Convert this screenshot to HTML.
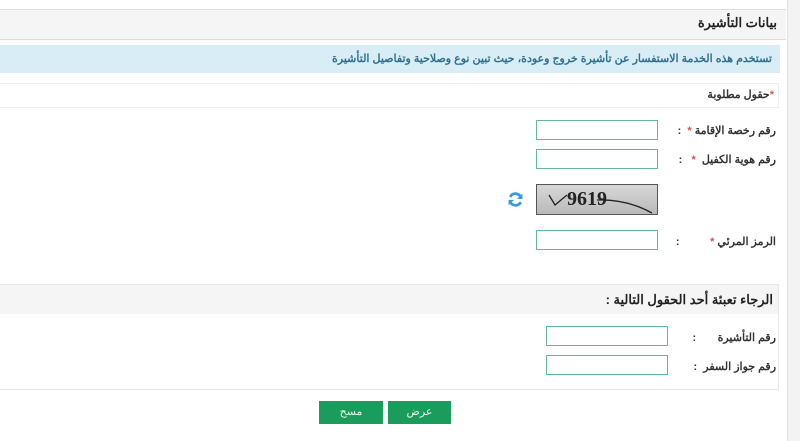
<!DOCTYPE html>
<html><head><meta charset="utf-8"><style>
body{margin:0;width:800px;height:441px;background:#fff;font-family:"Liberation Sans","Noto Sans CJK SC",sans-serif;position:relative;overflow:hidden;direction:rtl}
.a{position:absolute}
.inp{position:absolute;height:18px;border:1px solid #5fb99a;background:#fff}
.lbl{position:absolute;font-size:11px;font-weight:bold;color:#333;right:24px;white-space:nowrap}
.st{color:#d9534f}
.btn{position:absolute;top:401px;height:23px;width:63px;background:#1a9c5c;color:#e8f5ee;font-size:11px;text-align:center;line-height:23px}
</style></head><body>
<div class="a" style="left:787px;top:0;width:13px;height:441px;background:#f3f3f3;border-left:1px solid #e2e2e2"></div>
<div class="a" style="left:0;top:9px;width:786px;height:29px;background:#f5f5f5;border-top:1px solid #ddd;border-bottom:1px solid #ddd"></div>
<div class="a" style="right:23px;top:15px;font-size:13px;font-weight:bold;color:#222">بيانات التأشيرة</div>
<div class="a" style="left:0;top:45px;width:780px;height:28px;background:#d9edf7"></div>
<div class="a" style="right:28px;top:52px;font-size:11px;font-weight:bold;color:#31708f">تستخدم هذه الخدمة الاستفسار عن تأشيرة خروج وعودة، حيث تبين نوع وصلاحية وتفاصيل التأشيرة</div>
<div class="a" style="left:0;top:83px;width:778px;height:23px;background:#fff;border:1px solid #eee;border-left:none"></div>
<div class="a" style="right:26px;top:88px;font-size:11px;font-weight:bold;color:#333"><span class="st">*</span>حقول مطلوبة</div>
<div class="lbl" style="top:124px">رقم رخصة الإقامة <span class="st">*</span> &nbsp;:</div>
<div class="inp" style="left:536px;top:120px;width:120px"></div>
<div class="lbl" style="top:153px">رقم هوية الكفيل &nbsp;<span class="st">*</span> &nbsp;&nbsp;:</div>
<div class="inp" style="left:536px;top:149px;width:120px"></div>
<div class="a" style="left:536px;top:184px;width:120px;height:29px;border:1px solid #555;background:linear-gradient(#d8d8d8,#b9b9b9);direction:ltr"><span style="position:absolute;left:30px;top:3px;font-size:20px;font-weight:bold;font-family:'Liberation Serif',serif;color:#222">9619</span><svg class="a" style="left:0;top:0" width="120" height="29"><path d="M12 10 L18 20 L30 10 M60 15 Q90 14 115 28" stroke="#222" fill="none" stroke-width="1.3"/></svg></div>
<svg class="a" style="left:507px;top:191px" width="17" height="17" viewBox="0 0 16 16"><path d="M13 6 A5.5 5.5 0 0 0 3 5.5 M3 10 A5.5 5.5 0 0 0 13 10.5" stroke="#3a9bd5" stroke-width="2.6" fill="none"/><path d="M14.5 2.5 L14.5 7.5 L9.5 7.5Z M1.5 13.5 L1.5 8.5 L6.5 8.5Z" fill="#3a9bd5"/></svg>
<div class="lbl" style="top:235px">الرمز المرئي <span class="st">*</span> &nbsp;&nbsp;&nbsp;&nbsp;&nbsp;&nbsp;&nbsp;&nbsp;&nbsp;:</div>
<div class="inp" style="left:536px;top:230px;width:120px"></div>
<div class="a" style="left:0;top:284px;width:778px;height:104px;border:1px solid #e6e6e6;border-left:none"></div>
<div class="a" style="left:0;top:285px;width:778px;height:29px;background:#f5f5f5"></div>
<div class="a" style="right:27px;top:292px;font-size:13px;font-weight:bold;color:#222">الرجاء تعبئة أحد الحقول التالية :</div>
<div class="lbl" style="top:331px">رقم التأشيرة &nbsp;&nbsp;&nbsp;&nbsp;&nbsp;&nbsp;:</div>
<div class="inp" style="left:546px;top:326px;width:120px"></div>
<div class="lbl" style="top:360px">رقم جواز السفر &nbsp;:</div>
<div class="inp" style="left:546px;top:355px;width:120px"></div>
<div class="btn" style="left:388px">عرض</div>
<div class="btn" style="left:319px;width:64px">مسح</div>
</body></html>
